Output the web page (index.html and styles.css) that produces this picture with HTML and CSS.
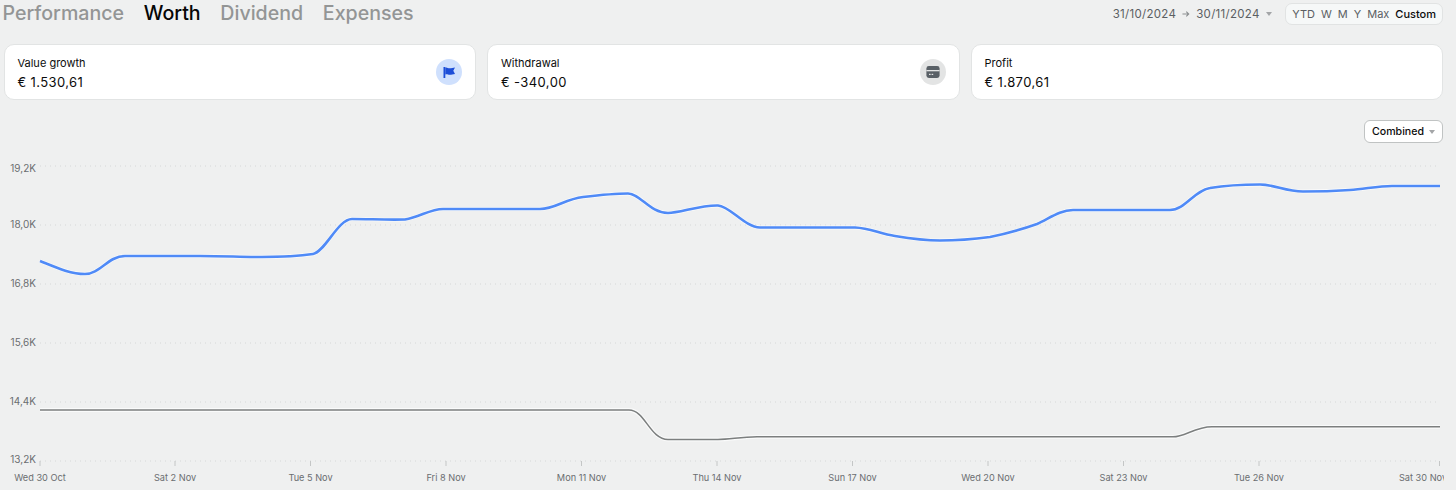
FILE: index.html
```html
<!DOCTYPE html>
<html lang="en">
<head>
<meta charset="utf-8">
<title>Worth</title>
<link rel="stylesheet" href="styles.css">
</head>
<body>
<div class="page">
  <header class="topbar">
    <nav class="tabs">
      <span class="tab">Performance</span>
      <span class="tab tab-active">Worth</span>
      <span class="tab">Dividend</span>
      <span class="tab">Expenses</span>
    </nav>
    <div class="controls">
      <div class="daterange">
        <span>31/10/2024</span>
        <svg class="arrow" width="8" height="8" viewBox="0 0 9 8"><path d="M0.5 4H7.5M4.8 1.2L7.6 4L4.8 6.8" fill="none" stroke="#8b8e90" stroke-width="1.2"/></svg>
        <span>30/11/2024</span>
        <span class="caret"></span>
      </div>
      <div class="segments">
        <span>YTD</span><span>W</span><span>M</span><span>Y</span><span>Max</span><span class="segment-active">Custom</span>
      </div>
    </div>
  </header>

  <section class="cards">
    <article class="card">
      <div class="card-text">
        <div class="card-label">Value growth</div>
        <div class="card-value">€ 1.530,61</div>
      </div>
      <div class="badge badge-blue">
        <svg width="14" height="14" viewBox="0 0 14 14"><rect x="1.500" y="2" width="1.800" height="11" fill="#1d4ed8"/><path d="M3.300 2.600C5 2 6 3.400 7.800 3.300C9.400 3.200 11 2.600 13 2.400L11.300 5.800L13 9C11 9.200 9.400 9.800 7.800 9.800C6 9.800 5 8.800 3.300 9.400Z" fill="#1d4ed8"/></svg>
      </div>
    </article>
    <article class="card">
      <div class="card-text">
        <div class="card-label">Withdrawal</div>
        <div class="card-value">€ -340,00</div>
      </div>
      <div class="badge badge-gray">
        <svg width="14" height="14" viewBox="0 0 14 14"><rect x="0.400" y="1" width="13.200" height="12" rx="2.400" fill="#596066"/><rect x="0.400" y="5" width="13.200" height="1.300" fill="#e3e4e4"/><rect x="3" y="8.800" width="1.600" height="1.200" fill="#e3e4e4"/><rect x="5.600" y="8.800" width="1.600" height="1.200" fill="#e3e4e4"/></svg>
      </div>
    </article>
    <article class="card">
      <div class="card-text">
        <div class="card-label">Profit</div>
        <div class="card-value">€ 1.870,61</div>
      </div>
    </article>
  </section>

  <div class="chart-tools">
    <button class="select" type="button">Combined <span class="caret"></span></button>
  </div>

  <svg class="chart" width="1440" height="350" viewBox="4 140 1440 350">
    <g class="grid">
      <line x1="40" x2="1440" y1="166" y2="166"/>
      <line x1="40" x2="1440" y1="225" y2="225"/>
      <line x1="40" x2="1440" y1="284" y2="284"/>
      <line x1="40" x2="1440" y1="343" y2="343"/>
      <line x1="40" x2="1440" y1="402" y2="402"/>
      <line x1="40" x2="1440" y1="461" y2="461"/>
    </g>
    <g class="ticks">
      <line x1="40" x2="40" y1="461" y2="466"/>
      <line x1="175" x2="175" y1="461" y2="466"/>
      <line x1="310.500" x2="310.500" y1="461" y2="466"/>
      <line x1="446" x2="446" y1="461" y2="466"/>
      <line x1="581.500" x2="581.500" y1="461" y2="466"/>
      <line x1="717" x2="717" y1="461" y2="466"/>
      <line x1="852.500" x2="852.500" y1="461" y2="466"/>
      <line x1="988" x2="988" y1="461" y2="466"/>
      <line x1="1123.500" x2="1123.500" y1="461" y2="466"/>
      <line x1="1259" x2="1259" y1="461" y2="466"/>
      <line x1="1439.500" x2="1439.500" y1="461" y2="466"/>
    </g>
    <g class="ylabels">
      <text x="36" y="172">19,2K</text>
      <text x="36" y="228">18,0K</text>
      <text x="36" y="287">16,8K</text>
      <text x="36" y="346">15,6K</text>
      <text x="36" y="405">14,4K</text>
      <text x="36" y="463">13,2K</text>
    </g>
    <g class="xlabels">
      <text x="40" y="481">Wed 30 Oct</text>
      <text x="175" y="481">Sat 2 Nov</text>
      <text x="310.500" y="481">Tue 5 Nov</text>
      <text x="446" y="481">Fri 8 Nov</text>
      <text x="581.500" y="481">Mon 11 Nov</text>
      <text x="717" y="481">Thu 14 Nov</text>
      <text x="852.500" y="481">Sun 17 Nov</text>
      <text x="988" y="481">Wed 20 Nov</text>
      <text x="1123.500" y="481">Sat 23 Nov</text>
      <text x="1259" y="481">Tue 26 Nov</text>
      <text x="1423" y="481">Sat 30 Nov</text>
    </g>
    <path class="halo" d="M40 410H629C645 410 650 439.500 668 439.500H718C730 439.500 740 437 757 436.800H1173C1185 436.800 1195 426.800 1212 426.800H1440"/>
    <path class="line-gray" d="M40 410H629C645 410 650 439.500 668 439.500H718C730 439.500 740 437 757 436.800H1173C1185 436.800 1195 426.800 1212 426.800H1440"/>
    <path class="halo" d="M40 261C55 267 70 274 85 274C100 274 108 256 125 256L200 256C225 256 240 257 262 257C280 257 300 256 313 254C325 252 338 219 352 219C370 219 385 220 405 219.500C420 217 430 209 443 209L540 209C555 209 565 199 583 197C600 195 615 193.500 628 193.500C640 193.500 650 213 668 213C680 213 700 205 718 205.500C730 206 745 227.500 760 227.500L855 227.500C870 228 880 234 895 236C910 238.500 925 240.500 940 240.500C960 240.500 975 239 990 237C1005 234 1020 230 1037 224C1050 218 1060 210 1073 210L1170 210C1185 210 1195 190 1210 188C1225 185.500 1245 184.500 1260 184.500C1275 184.500 1285 191.500 1303 191.500C1320 191.500 1335 191 1350 190C1365 189 1378 186 1392 186L1440 186"/>
    <path class="line-blue" d="M40 261C55 267 70 274 85 274C100 274 108 256 125 256L200 256C225 256 240 257 262 257C280 257 300 256 313 254C325 252 338 219 352 219C370 219 385 220 405 219.500C420 217 430 209 443 209L540 209C555 209 565 199 583 197C600 195 615 193.500 628 193.500C640 193.500 650 213 668 213C680 213 700 205 718 205.500C730 206 745 227.500 760 227.500L855 227.500C870 228 880 234 895 236C910 238.500 925 240.500 940 240.500C960 240.500 975 239 990 237C1005 234 1020 230 1037 224C1050 218 1060 210 1073 210L1170 210C1185 210 1195 190 1210 188C1225 185.500 1245 184.500 1260 184.500C1275 184.500 1285 191.500 1303 191.500C1320 191.500 1335 191 1350 190C1365 189 1378 186 1392 186L1440 186"/>
  </svg>
</div>
</body>
</html>
```
FILE: styles.css
```css
* { box-sizing: border-box; }
html, body { margin: 0; height: 100%; overflow: hidden; }
body {
  background: #eff0f0;
  font-family: Inter, "Liberation Sans", sans-serif;
  color: #0b0b0b;
}
.page { padding: 0 13px 0 3.500px; width: 1456px; height: 490px; }
.topbar {
  display: flex;
  justify-content: space-between;
  align-items: center;
  height: 27px;
}
.tabs { display: flex; gap: 19.700px; font-size: 19.600px; font-weight: 500; line-height: 27px; margin-left: -1px; }
.tab { color: #939595; }
.tab-active { color: #050505; }
.controls { display: flex; align-items: center; gap: 13.500px; }
.daterange { display: flex; align-items: center; gap: 6px; font-size: 11.500px; color: #5b5f63; letter-spacing: 0.3px; }
.arrow { display: block; }
.caret {
  display: inline-block;
  width: 0;
  height: 0;
  border-left: 3.500px solid transparent;
  border-right: 3.500px solid transparent;
  border-top: 4px solid #a3a5a7;
}
.segments {
  display: flex;
  align-items: center;
  gap: 6px;
  height: 22px;
  padding: 0 6px;
  background: #f6f8f8;
  border: 1px solid #e1e3e3;
  border-radius: 7px;
  font-size: 11px;
  color: #5b5f63;
}
.segment-active { color: #0b0b0b; font-weight: 500; }
.cards { display: grid; grid-template-columns: repeat(3, 1fr); gap: 11px; margin-top: 17px; }
.card {
  display: flex;
  align-items: center;
  justify-content: space-between;
  height: 56px;
  padding: 2px 13px 0;
  background: #fff;
  border: 1px solid #e2e4e4;
  border-radius: 10px;
}
.card-label { font-size: 11px; line-height: 14px; color: #0b0b0b; }
.card-value { font-size: 13px; line-height: 18px; margin-top: 3px; letter-spacing: 0.4px; color: #0b0b0b; }
.badge {
  width: 26px;
  height: 26px;
  border-radius: 50%;
  margin-top: -2px;
  display: flex;
  align-items: center;
  justify-content: center;
}
.badge-blue { background: #cfe0fd; }
.badge-gray { background: #e3e4e4; }
.chart-tools { display: flex; justify-content: flex-end; margin-top: 20px; height: 20px; }
.select {
  display: flex;
  align-items: center;
  gap: 5px;
  height: 23px;
  padding: 0 7px 0 7.500px;
  background: #fff;
  border: 1px solid #c0c3c3;
  border-radius: 6px;
  font: 500 10.600px Inter, "Liberation Sans", sans-serif;
  color: #0b0b0b;
}
.chart { display: block; overflow: hidden; }
.grid line { stroke: #d6d8d8; stroke-width: 1; stroke-dasharray: 1 4; }
.ticks line { stroke: #c4c6c6; stroke-width: 1; }
.ylabels text { font-size: 10px; fill: #6b6e70; text-anchor: end; }
.xlabels text { font-size: 9.200px; fill: #6b6e70; text-anchor: middle; }
.halo { fill: none; stroke: #fff; stroke-width: 3.800; opacity: 0.7; }
.line-blue { fill: none; stroke: #4f8af7; stroke-width: 2.600; }
.line-gray { fill: none; stroke: #7c7f7f; stroke-width: 1.500; }
```
